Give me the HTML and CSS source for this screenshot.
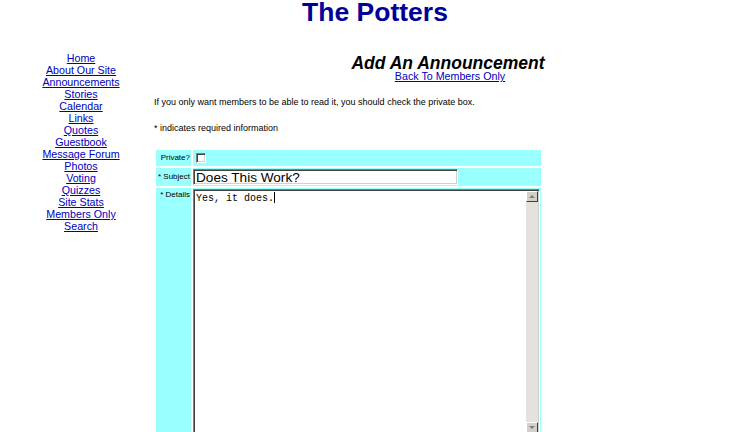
FILE: index.html
```html
<!DOCTYPE html>
<html>
<head>
<meta charset="utf-8">
<title>The Potters - Add An Announcement</title>
<link rel="stylesheet" href="styles.css">
</head>
<body>
<h1 class="site-title">The Potters</h1>
<div class="layout">
  <nav class="side-nav">
    <a href="#">Home</a>
    <a href="#">About Our Site</a>
    <a href="#">Announcements</a>
    <a href="#">Stories</a>
    <a href="#">Calendar</a>
    <a href="#">Links</a>
    <a href="#">Quotes</a>
    <a href="#">Guestbook</a>
    <a href="#">Message Forum</a>
    <a href="#">Photos</a>
    <a href="#">Voting</a>
    <a href="#">Quizzes</a>
    <a href="#">Site Stats</a>
    <a href="#">Members Only</a>
    <a href="#">Search</a>
  </nav>
  <main class="main">
    <h2 class="page-title">Add An Announcement</h2>
    <a class="back-link" href="#">Back To Members Only</a>
    <p class="note">If you only want members to be able to read it, you should check the private box.</p>
    <p class="note">* indicates required information</p>
    <form class="entry-form">
      <div class="cell label label-mid">Private?</div>
      <div class="cell value"><span class="checkbox"></span></div>
      <div class="cell label label-mid">* Subject</div>
      <div class="cell value"><input class="text-input" type="text" value="Does This Work?"></div>
      <div class="cell label label-top">* Details</div>
      <div class="cell value">
        <div class="textarea">
          <div class="ta-text">Yes, it does.<span class="caret"></span></div>
          <div class="scrollbar">
            <span class="sb-btn"><span class="arrow-up"></span></span>
            <span class="sb-track"></span>
            <span class="sb-btn"><span class="arrow-down"></span></span>
          </div>
        </div>
      </div>
    </form>
  </main>
</div>
</body>
</html>
```
FILE: styles.css
```css
html, body {
  background: #ffffff;
}
body {
  margin: 0 8px;
  font-family: "Liberation Sans", Arial, sans-serif;
  color: #000000;
  overflow: hidden;
}
.site-title {
  margin: 0;
  padding-top: 1px;
  text-align: center;
  font-size: 26.5px;
  line-height: 23px;
  font-weight: bold;
  color: #000099;
}
.layout {
  display: flex;
  margin-top: 28px;
}
.side-nav {
  width: 146px;
  flex: none;
  display: flex;
  flex-direction: column;
  align-items: center;
  font-size: 10.7px;
  line-height: 12px;
}
.side-nav a, .back-link {
  color: #0000bb;
  text-decoration: underline;
}
.main {
  flex: 1;
}
.page-title {
  margin: 4px 0 0;
  text-align: center;
  font-size: 17.5px;
  line-height: 15px;
  font-weight: bold;
  font-style: italic;
}
.back-link {
  display: block;
  width: max-content;
  margin: 0 auto;
  padding-left: 4px;
  font-size: 10.7px;
  line-height: 11px;
}
.note {
  margin: 14px 0 0;
  font-size: 9px;
  line-height: 12px;
}
.entry-form {
  margin-top: 14px;
  display: grid;
  grid-template-columns: 35px 348px;
  grid-template-rows: 16px 18px 247px;
  gap: 2px;
  padding: 2px;
  width: max-content;
}
.cell {
  background: #99ffff;
}
.label {
  font-size: 8px;
  line-height: 10px;
  text-align: right;
  padding-right: 1px;
  display: flex;
  justify-content: flex-end;
}
.label-mid {
  align-items: center;
}
.label-top {
  align-items: flex-start;
  padding-top: 2px;
}
.value {
  display: flex;
  align-items: flex-start;
}
.checkbox {
  display: block;
  width: 8px;
  height: 8px;
  margin: 3px 0 0 3px;
  background: #ffffff;
  border: 1px solid;
  border-color: #808080 #ffffff #ffffff #808080;
  box-shadow: inset 1px 1px #404040, inset -1px -1px #d4d0c8;
}
.text-input {
  box-sizing: border-box;
  width: 265px;
  height: 16px;
  margin: 1px 0 0;
  padding: 0 2px;
  font-family: "Liberation Sans", Arial, sans-serif;
  font-size: 13.6px;
  color: #000000;
  background: #ffffff;
  border: 1px solid;
  border-color: #808080 #ffffff #ffffff #808080;
  box-shadow: inset 1px 1px #404040, inset -1px -1px #d4d0c8;
  outline: none;
}
.textarea {
  box-sizing: border-box;
  width: 347px;
  height: 246px;
  margin-top: 1px;
  display: flex;
  background: #ffffff;
  border: 1px solid;
  border-color: #808080 #ffffff #ffffff #808080;
  box-shadow: inset 1px 1px #404040, inset -1px -1px #d4d0c8;
  padding: 1px;
}
.ta-text {
  flex: 1;
  padding: 1px 1px;
  font-family: "Liberation Mono", "Courier New", monospace;
  font-size: 10px;
  line-height: 13px;
  white-space: pre;
}
.caret {
  display: inline-block;
  width: 1px;
  height: 11px;
  background: #000000;
  vertical-align: -2px;
}
.scrollbar {
  width: 12px;
  flex: none;
  display: flex;
  flex-direction: column;
  background: #e4e2dc;
}
.sb-track {
  flex: 1;
}
.sb-btn {
  box-sizing: border-box;
  height: 11px;
  background: #d4d0c8;
  border: 1px solid;
  border-color: #ffffff #404040 #404040 #ffffff;
  display: flex;
  align-items: center;
  justify-content: center;
}
.arrow-up, .arrow-down {
  width: 0;
  height: 0;
  border-left: 3px solid transparent;
  border-right: 3px solid transparent;
}
.arrow-up {
  border-bottom: 3px solid #808080;
}
.arrow-down {
  border-top: 3px solid #808080;
}
```
